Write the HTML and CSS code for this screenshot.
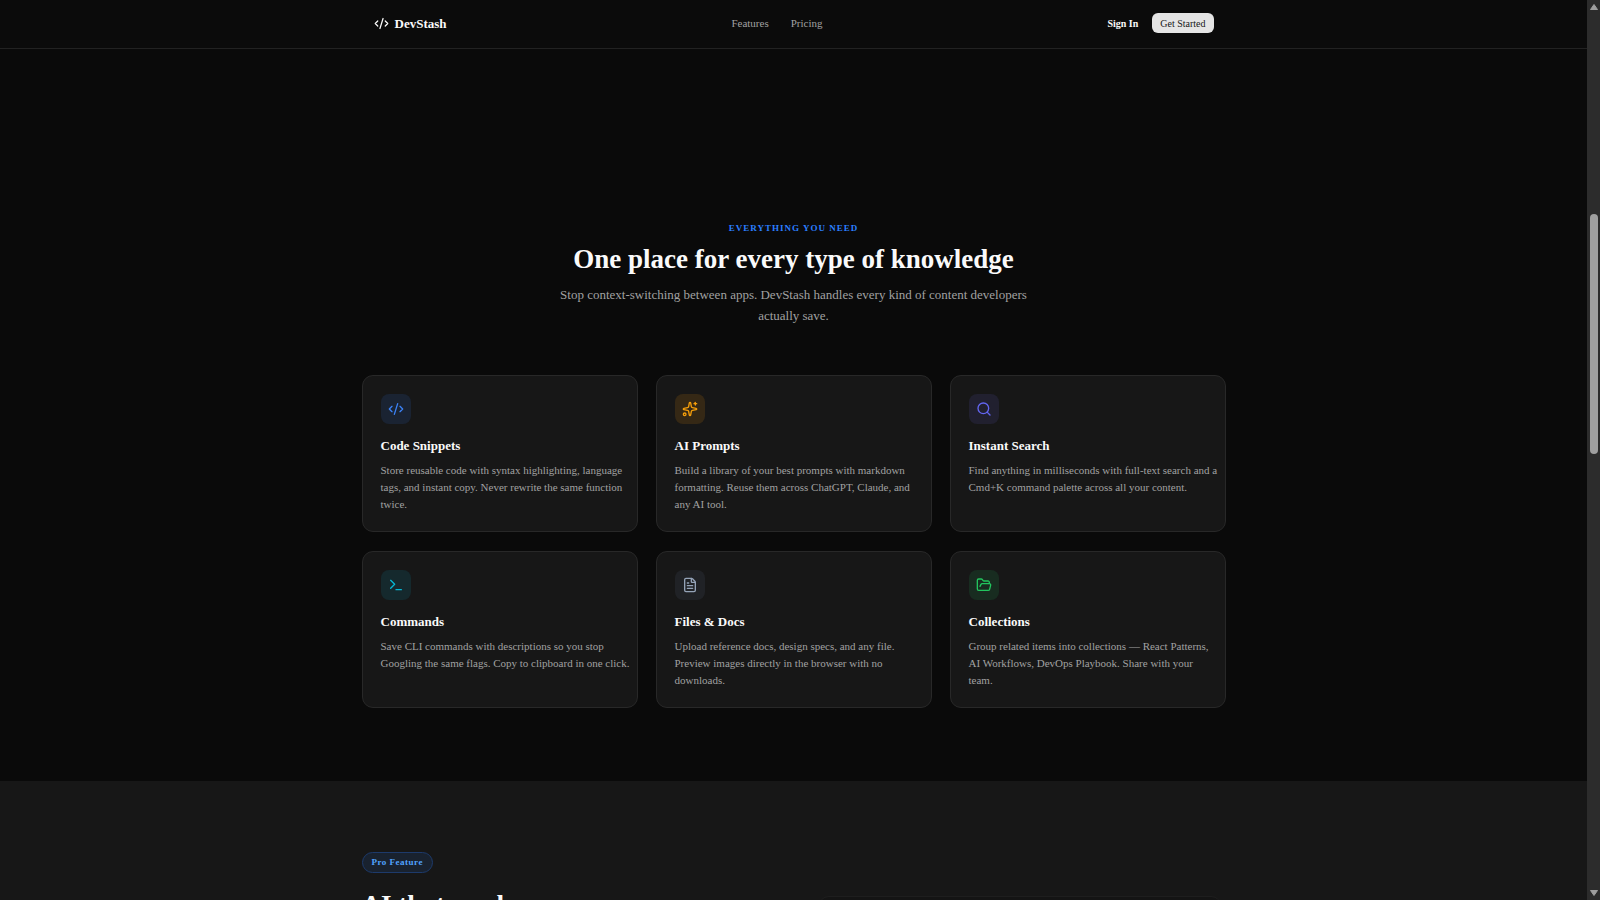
FILE: index.html
```html
<!DOCTYPE html>
<html lang="en">
<head>
    <meta charset="UTF-8">
    <meta name="viewport" content="width=device-width, initial-scale=1.0">
    <title>DevStash</title>
    <link rel="stylesheet" href="styles.css">
</head>
<body>
    <div class="page">
        <header class="header">
            <div class="header-inner">
                <a href="#" class="brand">
                    <svg class="icon" viewBox="0 0 24 24"><path d="m18 16 4-4-4-4"/><path d="m6 8-4 4 4 4"/><path d="m14.5 4-5 16"/></svg>
                    DevStash
                </a>
                <nav class="nav">
                    <a href="#features">Features</a>
                    <a href="#pricing">Pricing</a>
                </nav>
                <div class="actions">
                    <a href="#" class="sign-in">Sign In</a>
                    <button type="button" class="get-started">Get Started</button>
                </div>
            </div>
        </header>

        <main>
            <section class="features" id="features">
                <div class="intro">
                    <p class="eyebrow">Everything you need</p>
                    <h2>One place for every type of knowledge</h2>
                    <p class="lead">Stop context-switching between apps. DevStash handles every kind of content developers<br>actually save.</p>
                </div>

                <div class="cards">
                    <article class="card">
                        <div class="card-icon blue">
                            <svg class="icon" viewBox="0 0 24 24"><path d="m18 16 4-4-4-4"/><path d="m6 8-4 4 4 4"/><path d="m14.5 4-5 16"/></svg>
                        </div>
                        <h3>Code Snippets</h3>
                        <p>Store reusable code with syntax highlighting, language<br>tags, and instant copy. Never rewrite the same function<br>twice.</p>
                    </article>
                    <article class="card">
                        <div class="card-icon amber">
                            <svg class="icon" viewBox="0 0 24 24"><path d="M11.017 2.814a1 1 0 0 1 1.966 0l1.051 5.558a2 2 0 0 0 1.594 1.594l5.558 1.051a1 1 0 0 1 0 1.966l-5.558 1.051a2 2 0 0 0-1.594 1.594l-1.051 5.558a1 1 0 0 1-1.966 0l-1.051-5.558a2 2 0 0 0-1.594-1.594l-5.558-1.051a1 1 0 0 1 0-1.966l5.558-1.051a2 2 0 0 0 1.594-1.594z"/><path d="M20 2v4"/><path d="M22 4h-4"/><circle cx="4" cy="20" r="2"/></svg>
                        </div>
                        <h3>AI Prompts</h3>
                        <p>Build a library of your best prompts with markdown<br>formatting. Reuse them across ChatGPT, Claude, and<br>any AI tool.</p>
                    </article>
                    <article class="card">
                        <div class="card-icon indigo">
                            <svg class="icon" viewBox="0 0 24 24"><path d="m21 21-4.34-4.34"/><circle cx="11" cy="11" r="8"/></svg>
                        </div>
                        <h3>Instant Search</h3>
                        <p>Find anything in milliseconds with full-text search and a<br>Cmd+K command palette across all your content.</p>
                    </article>
                    <article class="card">
                        <div class="card-icon cyan">
                            <svg class="icon" viewBox="0 0 24 24"><path d="M12 19h8"/><path d="m4 17 6-6-6-6"/></svg>
                        </div>
                        <h3>Commands</h3>
                        <p>Save CLI commands with descriptions so you stop<br>Googling the same flags. Copy to clipboard in one click.</p>
                    </article>
                    <article class="card">
                        <div class="card-icon slate">
                            <svg class="icon" viewBox="0 0 24 24"><path d="M6 22a2 2 0 0 1-2-2V4a2 2 0 0 1 2-2h8a2.4 2.4 0 0 1 1.704.706l3.588 3.588A2.4 2.4 0 0 1 20 8v12a2 2 0 0 1-2 2z"/><path d="M14 2v5a1 1 0 0 0 1 1h5"/><path d="M10 9H8"/><path d="M16 13H8"/><path d="M16 17H8"/></svg>
                        </div>
                        <h3>Files &amp; Docs</h3>
                        <p>Upload reference docs, design specs, and any file.<br>Preview images directly in the browser with no<br>downloads.</p>
                    </article>
                    <article class="card">
                        <div class="card-icon green">
                            <svg class="icon" viewBox="0 0 24 24"><path d="m6 14 1.5-2.9A2 2 0 0 1 9.24 10H20a2 2 0 0 1 1.94 2.5l-1.54 6a2 2 0 0 1-1.95 1.5H4a2 2 0 0 1-2-2V5a2 2 0 0 1 2-2h3.9a2 2 0 0 1 1.69.9l.81 1.2a2 2 0 0 0 1.67.9H18a2 2 0 0 1 2 2v2"/></svg>
                        </div>
                        <h3>Collections</h3>
                        <p>Group related items into collections — React Patterns,<br>AI Workflows, DevOps Playbook. Share with your<br>team.</p>
                    </article>
                </div>
            </section>

            <section class="pro">
                <div class="pro-inner">
                    <div class="pro-text">
                        <span class="badge">Pro Feature</span>
                        <h2>AI that works</h2>
                    </div>
                    <div class="preview"></div>
                </div>
            </section>
        </main>
    </div>

    <div class="scrollbar">
        <svg class="arrow" viewBox="0 0 8 6"><path d="M4 0.5 7.5 5.5h-7z" stroke-width="1" stroke-linejoin="round"/></svg>
        <div class="track">
            <div class="thumb"></div>
        </div>
        <svg class="arrow" viewBox="0 0 8 6"><path d="M4 5.5 0.5 0.5h7z" stroke-width="1" stroke-linejoin="round"/></svg>
    </div>
</body>
</html>
```
FILE: styles.css
```css
* {
    box-sizing: border-box;
    margin: 0;
    padding: 0;
}
body {
    display: flex;
    height: 100vh;
    overflow: hidden;
    background-color: #0a0a0a;
    color: #fafafa;
    font-family: "Liberation Serif", "Times New Roman", serif;
    font-size: 11px;
    line-height: 17px;
}
a {
    color: inherit;
    text-decoration: none;
}
.page {
    flex: 1;
    min-width: 0;
    overflow: hidden;
}
.icon {
    width: 16px;
    height: 16px;
    fill: none;
    stroke: currentColor;
    stroke-width: 2;
    stroke-linecap: round;
    stroke-linejoin: round;
}

/* header */
.header {
    background-color: #0b0b0b;
    border-bottom: 1px solid #222;
}
.header-inner {
    display: flex;
    align-items: center;
    justify-content: space-between;
    max-width: 864px;
    height: 48px;
    margin: 0 auto;
    padding: 0 12px 2px;
}
.brand {
    display: flex;
    align-items: center;
    gap: 6px;
    font-size: 13px;
    font-weight: bold;
}
.brand .icon {
    width: 15px;
    height: 15px;
}
.nav {
    display: flex;
    gap: 22px;
    color: #a1a1a1;
}
.actions {
    display: flex;
    align-items: center;
    gap: 14px;
    font-size: 10px;
}
.sign-in {
    font-weight: bold;
}
.get-started {
    height: 20px;
    padding: 0 8px;
    border: none;
    border-radius: 6px;
    background-color: #e5e5e5;
    color: #171717;
    font-family: inherit;
    font-size: 10px;
    cursor: pointer;
}

/* features */
.features {
    max-width: 864px;
    margin: 0 auto;
    padding: 171px 0 73px;
}
.intro {
    max-width: 500px;
    margin: 0 auto 49px;
    text-align: center;
}
.eyebrow {
    color: #2b7fff;
    font-size: 9px;
    font-weight: bold;
    letter-spacing: 1px;
    text-transform: uppercase;
}
h2 {
    font-size: 27px;
    line-height: 32px;
}
.intro h2 {
    margin: 6px 0 9px;
}
.lead {
    color: #a1a1a1;
    font-size: 13px;
    line-height: 21px;
}
.cards {
    display: grid;
    grid-template-columns: repeat(3, 1fr);
    gap: 19px 18px;
}
.card {
    padding: 18px 6px 18px 18px;
    border: 1px solid #282828;
    border-radius: 11px;
    background-color: #171717;
}
.card-icon {
    display: flex;
    align-items: center;
    justify-content: center;
    width: 30px;
    height: 30px;
    margin-bottom: 13px;
    border-radius: 8px;
}
.card h3 {
    margin-bottom: 7px;
    font-size: 13px;
    line-height: 18px;
}
.card p {
    color: #a1a1a1;
}
.blue {
    background-color: #1a2332;
    color: #3b82f6;
}
.amber {
    background-color: #352815;
    color: #f59e0b;
}
.indigo {
    background-color: #21202f;
    color: #6366f1;
}
.cyan {
    background-color: #15292d;
    color: #06b6d4;
}
.slate {
    background-color: #202226;
    color: #94a3b8;
}
.green {
    background-color: #182c20;
    color: #22c55e;
}

/* pro */
.pro {
    padding: 71px 0;
    background-color: #171717;
}
.pro-inner {
    display: grid;
    grid-template-columns: 1fr 404px;
    max-width: 864px;
    margin: 0 auto;
    padding-right: 4px;
}
.pro-text {
    display: flex;
    flex-direction: column;
    align-items: flex-start;
    gap: 16px;
}
.badge {
    padding: 1px 9px;
    border: 1px solid #1d3a6b;
    border-radius: 11px;
    background-color: #19222f;
    color: #51a2ff;
    font-size: 9px;
    font-weight: bold;
    letter-spacing: 0.5px;
}
.preview {
    height: 240px;
    margin-top: 44px;
    border: 1px solid #1e1e1e;
    border-radius: 11px;
    background-color: #141414;
}

/* scrollbar */
.scrollbar {
    display: flex;
    flex-direction: column;
    align-items: center;
    width: 13px;
    padding: 4px 0;
    background-color: #2c2c2c;
}
.arrow {
    width: 8px;
    height: 6px;
    fill: #9f9f9f;
    stroke: #9f9f9f;
}
.track {
    flex: 1;
    padding-top: 204px;
}
.thumb {
    width: 8px;
    height: 240px;
    border-radius: 4px;
    background-color: #9f9f9f;
}
```
